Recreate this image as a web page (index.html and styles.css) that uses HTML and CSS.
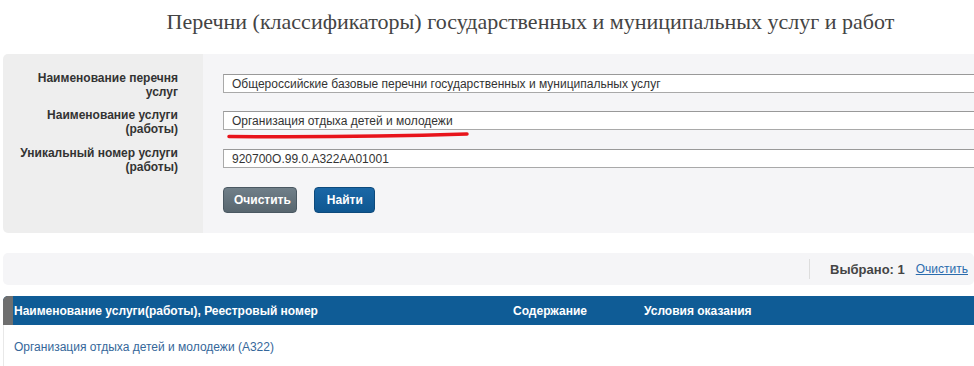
FILE: index.html
```html
<!DOCTYPE html>
<html lang="ru">
<head>
    <meta charset="UTF-8">
    <meta name="viewport" content="width=device-width, initial-scale=1.0">
    <title>Перечни (классификаторы) государственных и муниципальных услуг и работ</title>
    <link rel="stylesheet" href="styles.css">
</head>
<body>
    <div class="page">
        <h1>Перечни (классификаторы) государственных и муниципальных услуг и работ</h1>

        <div class="search">
            <div class="row">
                <label for="listName">Наименование перечня<br>услуг</label>
                <div class="field">
                    <input type="text" id="listName" value="Общероссийские базовые перечни государственных и муниципальных услуг" readonly>
                </div>
            </div>
            <div class="row">
                <label for="serviceName">Наименование услуги<br>(работы)</label>
                <div class="field">
                    <input type="text" id="serviceName" value="Организация отдыха детей и молодежи">
                    <svg class="marker" width="245" height="8" viewBox="0 0 245 8">
                        <path d="M2 5.5 C 60 6, 160 5.5, 240 3" fill="none" stroke="#e8141b" stroke-width="3.5" stroke-linecap="round"/>
                    </svg>
                </div>
            </div>
            <div class="row">
                <label for="serviceCode">Уникальный номер услуги<br>(работы)</label>
                <div class="field">
                    <input type="text" id="serviceCode" value="920700О.99.0.А322АА01001">
                </div>
            </div>
            <div class="row buttons">
                <span></span>
                <div class="field">
                    <button class="btn btn-grey">Очистить</button>
                    <button class="btn btn-blue">Найти</button>
                </div>
            </div>
        </div>

        <div class="selected">
            <span class="divider"></span>
            <b>Выбрано: 1</b>
            <a href="#">Очистить</a>
        </div>

        <div class="results">
            <div class="results-head">
                <span class="stripe"></span>
                <span class="col-name">Наименование услуги(работы), Реестровый номер</span>
                <span class="col-content">Содержание</span>
                <span class="col-terms">Условия оказания</span>
            </div>
            <div class="results-row">
                <a href="#">Организация отдыха детей и молодежи (А322)</a>
            </div>
        </div>
    </div>
</body>
</html>
```

FILE: styles.css
```css
body {
    margin: 0;
    padding: 0;
    background-color: #fff;
    font-family: "Liberation Sans", Arial, sans-serif;
    font-size: 12px;
    color: #333;
    overflow: hidden;
}
.page {
    width: 971px;
    margin-left: 3px;
}
h1 {
    margin: 0 0 10px 0;
    padding-left: 84px;
    line-height: 44px;
    font-family: "Liberation Serif", "Times New Roman", serif;
    font-size: 22px;
    font-weight: normal;
    color: #444;
    text-align: center;
    white-space: nowrap;
}
.search {
    margin-right: -40px;
    padding: 17px 0 20px 0;
    background: linear-gradient(to right, #eeeeee 200px, #f5f5f7 200px);
    border-radius: 5px 0 0 5px;
}
.row {
    display: grid;
    grid-template-columns: 200px 1fr;
    height: 38px;
}
.row:first-child {
    height: 37px;
}
.row label {
    padding-right: 25px;
    text-align: right;
    font-weight: bold;
    line-height: 14px;
    color: #333;
}
.field {
    position: relative;
    padding-left: 20px;
}
.field input {
    box-sizing: border-box;
    width: 100%;
    height: 19px;
    margin-top: 3px;
    padding: 0 8px;
    border: 1px solid #a9a9a9;
    border-top-color: #999;
    background-color: #fff;
    font-family: "Liberation Sans", Arial, sans-serif;
    font-size: 12px;
    color: #333;
    outline: none;
}
.marker {
    position: absolute;
    left: 24px;
    top: 23px;
}
.buttons {
    height: 29px;
}
.btn {
    height: 26px;
    margin-top: 3px;
    padding: 0 10px;
    border: 1px solid #4a5862;
    border-radius: 4px;
    font-family: "Liberation Sans", Arial, sans-serif;
    font-size: 12px;
    font-weight: bold;
    color: #fff;
    cursor: pointer;
}
.btn-grey {
    width: 74px;
    background: linear-gradient(#707f89, #58666f);
}
.btn-blue {
    width: 61px;
    margin-left: 14px;
    border-color: #0d4a7c;
    background: linear-gradient(#1b67a6, #0f5791);
}
.selected {
    display: flex;
    align-items: center;
    justify-content: flex-end;
    height: 32px;
    margin-top: 20px;
    padding-right: 6px;
    background-color: #f5f5f7;
    border-radius: 5px;
    font-size: 13px;
}
.selected .divider {
    width: 1px;
    height: 20px;
    margin-right: 20px;
    background-color: #ddd;
}
.selected b {
    color: #444;
}
.selected a {
    margin-left: 11px;
    font-size: 12px;
    color: #2b6cad;
}
.results {
    margin-top: 11px;
}
.results-head {
    display: flex;
    align-items: center;
    height: 29px;
    background-color: #0f5c96;
    border-radius: 5px 0 0 0;
    overflow: hidden;
    font-weight: bold;
    color: #fff;
}
.stripe {
    align-self: stretch;
    width: 10px;
    background-color: #6f6f6f;
}
.col-name {
    width: 499px;
    padding-left: 1px;
}
.col-content {
    width: 131px;
}
.results-row {
    height: 41px;
    padding-left: 10px;
    border-left: 1px solid #e8e8e8;
    line-height: 44px;
}
.results-row a {
    color: #35679a;
    text-decoration: none;
}
```
